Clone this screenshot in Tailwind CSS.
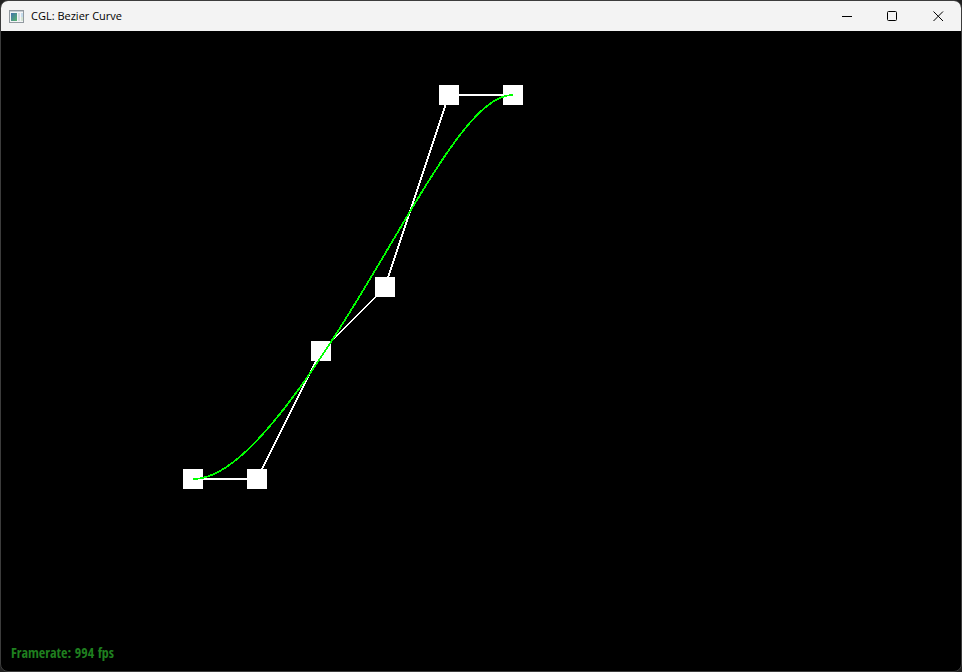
<!DOCTYPE html>
<html lang="en">
<head>
<meta charset="utf-8">
<title>CGL: Bezier Curve</title>
<script src="https://cdn.jsdelivr.net/npm/@tailwindcss/browser@4"></script>
</head>
<body class="bg-[#202020]">
<div class="flex h-screen flex-col overflow-hidden rounded-lg border border-[#3c3c3c] bg-black">
  <header class="flex h-[30px] shrink-0 items-center bg-[#f3f3f3] pl-2 text-black">
    <svg class="mr-[7px] h-[13px] w-[15px]" viewBox="0 0 15 13" shape-rendering="crispEdges" aria-hidden="true">
      <defs><linearGradient id="pane" x1="0" y1="0" x2="1" y2="1"><stop offset="0" stop-color="#4372ad"/><stop offset="1" stop-color="#59b56b"/></linearGradient></defs>
      <rect width="15" height="13" fill="#929aa0"/>
      <rect x="1" y="1" width="13" height="11" fill="#f4f5f7"/>
      <rect x="1" y="1" width="13" height="1" fill="#c6ccd2"/>
      <rect x="2" y="3" width="6" height="8" fill="url(#pane)"/>
      <rect x="9" y="3" width="2" height="8" fill="#d8dde2"/>
      <rect x="12" y="3" width="2" height="4" fill="#c5dcec"/>
      <rect x="12" y="7" width="2" height="4" fill="#d5e5d5"/>
    </svg>
    <h1 class="grow font-['Open_Sans',sans-serif] text-[11px] leading-4">CGL: Bezier Curve</h1>
    <button aria-label="Minimize" class="flex h-full w-[46px] items-center justify-center"><svg class="size-[11px]" viewBox="0 0 11 11" shape-rendering="crispEdges"><path d="M0 5.5h10" stroke="#000"/></svg></button>
    <button aria-label="Maximize" class="flex h-full w-[45px] items-center justify-center"><svg class="size-[11px]" viewBox="0 0 11 11"><rect x=".5" y=".5" width="9" height="9" rx="1" fill="none" stroke="#000"/></svg></button>
    <button aria-label="Close" class="flex h-full w-[46px] items-center justify-center"><svg class="size-[11px]" viewBox="0 0 11 11"><path d="M.5.5l9.500 9.500M10 .5L.5 10" stroke="#000" fill="none"/></svg></button>
  </header>
  <main class="relative min-h-0 grow">
    <svg id="scene" class="size-full" shape-rendering="crispEdges" role="img" aria-label="Bezier curve with six control points"></svg>
    <p class="absolute bottom-2 left-[10px] font-['Open_Sans_Condensed','Liberation_Sans_Narrow',sans-serif] text-[14px] leading-5 font-bold text-[#1f7f1f]">Framerate: 994 fps</p>
  </main>
</div>
<script>
  const points = [[192, 448], [256, 448], [320, 320], [384, 256], [448, 64], [512, 64]];
  const scene = document.getElementById('scene');

  function segment(a, b, color) {
    const dx = b[0] - a[0], dy = b[1] - a[1];
    const line = document.createElementNS('http://www.w3.org/2000/svg', 'line');
    const width = 2 * Math.max(Math.abs(dx), Math.abs(dy)) / Math.hypot(dx, dy);
    const attrs = { x1: a[0], y1: a[1], x2: b[0], y2: b[1], stroke: color, 'stroke-width': width };
    for (const k in attrs) line.setAttribute(k, attrs[k]);
    scene.append(line);
  }

  // De Casteljau evaluation
  function bezier(t) {
    let p = points;
    while (p.length > 1)
      p = p.slice(1).map((q, i) => [p[i][0] + (q[0] - p[i][0]) * t, p[i][1] + (q[1] - p[i][1]) * t]);
    return p[0];
  }

  for (let i = 1; i < points.length; i++) segment(points[i - 1], points[i], '#fff');
  for (const [x, y] of points) {
    const handle = document.createElementNS('http://www.w3.org/2000/svg', 'rect');
    const attrs = { x: x - 10, y: y - 10, width: 20, height: 20, fill: '#fff' };
    for (const k in attrs) handle.setAttribute(k, attrs[k]);
    scene.append(handle);
  }
  const curve = document.createElementNS('http://www.w3.org/2000/svg', 'polyline');
  curve.setAttribute('points', Array.from({ length: 101 }, (_, i) => bezier(i / 100).join()).join(' '));
  curve.setAttribute('fill', 'none');
  curve.setAttribute('stroke', '#0f0');
  curve.setAttribute('stroke-width', '1.75');
  scene.append(curve);
</script>
</body>
</html>
